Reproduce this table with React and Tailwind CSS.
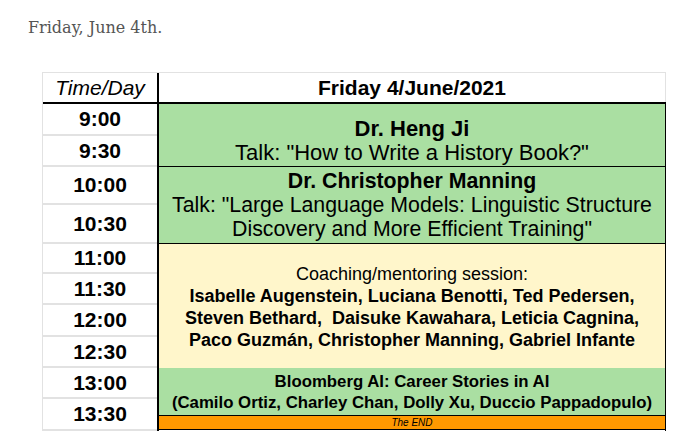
import React from "react";

const times = [
  { t: "9:00", h: "h-[32px]" },
  { t: "9:30", h: "h-[31px]" },
  { t: "10:00", h: "h-[38px]" },
  { t: "10:30", h: "h-[39px]" },
  { t: "11:00", h: "h-[30px]" },
  { t: "11:30", h: "h-[31px]" },
  { t: "12:00", h: "h-[32px]" },
  { t: "12:30", h: "h-[31px]" },
  { t: "13:00", h: "h-[31px]" },
  { t: "13:30", h: "h-[32px]" },
];

export default function App() {
  return (
    <div className="w-[683px] h-[447px] bg-white overflow-hidden font-['Liberation_Sans',Arial,sans-serif] text-black">
      <p className="pl-[28px] pt-[17px] text-[16px] leading-[22px] text-[#555] font-['DejaVu_Serif',serif]">
        Friday, June 4th.
      </p>

      <div className="ml-[42px] mt-[33px] w-[624px] border-t border-l border-[#e2e2e2]">
        {/* header */}
        <div className="flex h-[31px] border-b-2 border-black">
          <div className="w-[116px] flex items-center justify-center italic text-[21px] border-r-2 border-black">
            Time/Day
          </div>
          <div className="flex-1 flex items-center justify-center font-bold text-[21px] border-r border-[#e2e2e2]">
            Friday 4/June/2021
          </div>
        </div>

        {/* body */}
        <div className="flex">
          <div className="w-[116px] flex flex-col border-r-2 border-black">
            {times.map((r) => (
              <div
                key={r.t}
                className={`${r.h} flex items-center justify-center font-bold text-[21px] border-b-2 border-[#e2e2e2]`}
              >
                {r.t}
              </div>
            ))}
          </div>

          <div className="flex-1 flex flex-col border-r border-black">
            <div className="h-[63px] bg-[#aadfa2] border-b border-black flex flex-col items-center justify-end pb-[1px] text-[22px] leading-[24px]">
              <div className="font-bold">Dr. Heng Ji</div>
              <div>Talk: "How to Write a History Book?"</div>
            </div>
            <div className="h-[77px] bg-[#aadfa2] border-b border-black flex flex-col items-center justify-end pb-[2px] text-[21.3px] leading-[24px] text-center">
              <div className="font-bold">Dr. Christopher Manning</div>
              <div>Talk: "Large Language Models: Linguistic Structure</div>
              <div>Discovery and More Efficient Training"</div>
            </div>
            <div className="h-[124px] bg-[#fff6cb] flex flex-col items-center justify-center pt-[2px] text-center">
              <div className="text-[18px] leading-[22px]">Coaching/mentoring session:</div>
              <div className="font-bold text-[18px] leading-[22px]">
                Isabelle Augenstein, Luciana Benotti, Ted Pedersen,
              </div>
              <div className="font-bold text-[18px] leading-[22px]">
                Steven Bethard,&nbsp; Daisuke Kawahara, Leticia Cagnina,
              </div>
              <div className="font-bold text-[18px] leading-[22px]">
                Paco Guzmán, Christopher Manning, Gabriel Infante
              </div>
            </div>
            <div className="h-[48px] bg-[#aadfa2] border-b border-black flex flex-col items-center justify-center font-bold text-[16.8px] leading-[21px]">
              <div>Bloomberg AI: Career Stories in AI</div>
              <div>(Camilo Ortiz, Charley Chan, Dolly Xu, Duccio Pappadopulo)</div>
            </div>
            <div className="h-[14px] bg-[#ff9900] border-b border-black flex items-center justify-center italic text-[10px] leading-[10px]">
              The END
            </div>
          </div>
        </div>
      </div>
    </div>
  );
}
